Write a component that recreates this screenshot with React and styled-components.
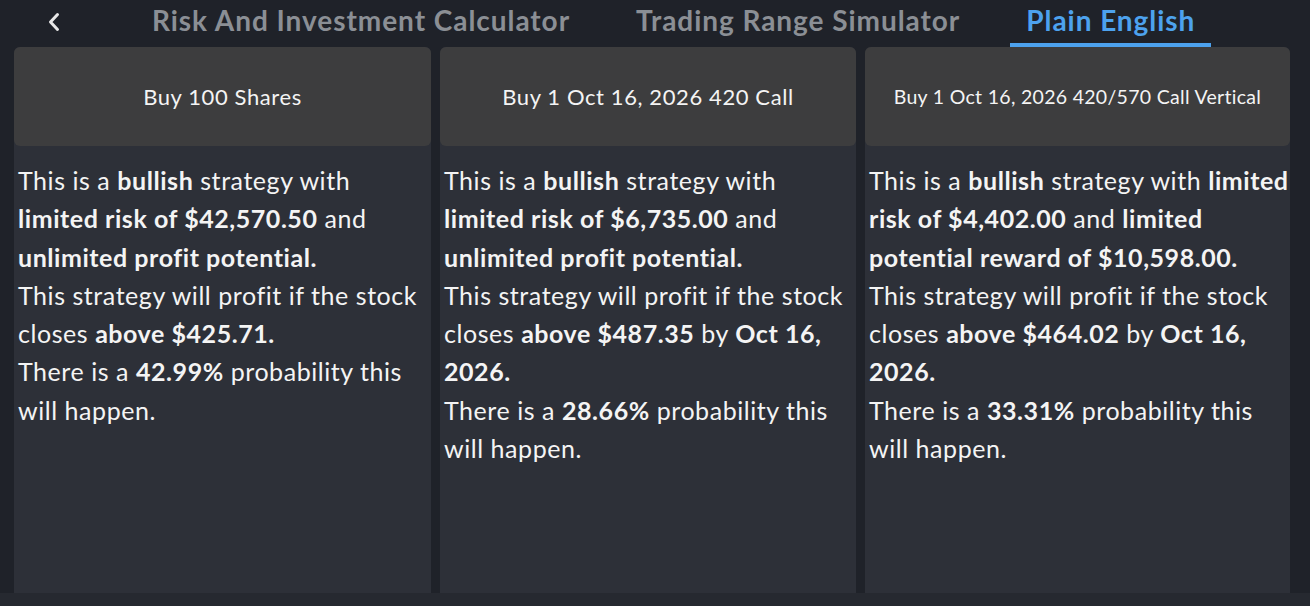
import styled, { createGlobalStyle } from 'styled-components'

const GlobalStyle = createGlobalStyle`
  html, body {
    margin: 0;
    padding: 0;
    background: #1f2229;
    font-family: "Lato", "Noto Sans", sans-serif;
  }
`

const Page = styled.div`
  width: 1310px;
  height: 606px;
  background: #1f2229;
  display: flex;
  flex-direction: column;
  overflow: hidden;
`

const TabBar = styled.div`
  height: 47px;
  display: flex;
  align-items: stretch;
  padding-left: 34px;
`

const BackButton = styled.button`
  width: 40px;
  border: none;
  background: none;
  padding: 0 0 4px;
  display: flex;
  align-items: center;
  justify-content: center;
  color: #e8e8e8;
  margin-right: 62px;
  cursor: pointer;
`

const Tabs = styled.div`
  display: flex;
  gap: 34px;
`

const Tab = styled.div`
  padding: 0 16px 3px;
  display: flex;
  align-items: center;
  font-size: 28px;
  letter-spacing: 0.95px;
  font-weight: 700;
  color: ${p => (p.$active ? '#4da2ee' : '#8b8f95')};
  border-bottom: 4px solid ${p => (p.$active ? '#4da2ee' : 'transparent')};
  box-sizing: border-box;
  height: 47px;
  white-space: nowrap;
`

const Columns = styled.div`
  display: grid;
  grid-template-columns: 417px 416px 425px;
  gap: 9px;
  padding-left: 14px;
  height: 546px;
`

const Card = styled.div`
  background: #2d3038;
  border-radius: 6px 6px 0 0;
  display: flex;
  flex-direction: column;
`

const CardHeader = styled.div`
  height: 99px;
  background: #3d3d3e;
  border-radius: 6px;
  display: flex;
  align-items: center;
  justify-content: center;
  color: #f4f4f4;
  font-size: ${p => p.$size || 22}px;
  letter-spacing: ${p => (p.$size ? 0.3 : 0.6)}px;
  white-space: nowrap;
`

const CardBody = styled.div`
  padding: 15px 0 0 4px;
  color: #f4f4f4;
  font-size: 25px;
  line-height: 38.3px;
  letter-spacing: 0.55px;

  & b {
    font-weight: 700;
  }
`

const Footer = styled.div`
  flex: 1;
  background: #262930;
`

const ChevronIcon = () => (
  <svg width="14" height="20" viewBox="0 0 14 20" fill="none">
    <path d="M10.5 2.5 L3.5 10 L10.5 17.5" stroke="currentColor" strokeWidth="3" strokeLinecap="round" strokeLinejoin="round" />
  </svg>
)

const tabs = ['Risk And Investment Calculator', 'Trading Range Simulator', 'Plain English']

const App = () => {
  return (
    <Page>
      <GlobalStyle />
      <TabBar>
        <BackButton aria-label="back">
          <ChevronIcon />
        </BackButton>
        <Tabs>
          {tabs.map(t => (
            <Tab key={t} $active={t === 'Plain English'}>{t}</Tab>
          ))}
        </Tabs>
      </TabBar>
      <Columns>
        <Card>
          <CardHeader>Buy 100 Shares</CardHeader>
          <CardBody>
            This is a <b>bullish</b> strategy with <b>limited risk of $42,570.50</b> and{' '}
            <b>unlimited profit potential.</b>
            <br />
            This strategy will profit if the stock closes <b>above $425.71.</b>
            <br />
            There is a <b>42.99%</b> probability this will happen.
          </CardBody>
        </Card>
        <Card>
          <CardHeader>Buy 1 Oct 16, 2026 420 Call</CardHeader>
          <CardBody>
            This is a <b>bullish</b> strategy with <b>limited risk of $6,735.00</b> and{' '}
            <b>unlimited profit potential.</b>
            <br />
            This strategy will profit if the stock closes <b>above $487.35</b> by <b>Oct 16, 2026.</b>
            <br />
            There is a <b>28.66%</b> probability this will happen.
          </CardBody>
        </Card>
        <Card>
          <CardHeader $size={19.5}>Buy 1 Oct 16, 2026 420/570 Call Vertical</CardHeader>
          <CardBody>
            This is a <b>bullish</b> strategy with <b>limited risk of $4,402.00</b> and{' '}
            <b>limited potential reward of $10,598.00.</b>
            <br />
            This strategy will profit if the stock closes <b>above $464.02</b> by <b>Oct 16, 2026.</b>
            <br />
            There is a <b>33.31%</b> probability this will happen.
          </CardBody>
        </Card>
      </Columns>
      <Footer />
    </Page>
  )
}

export default App
